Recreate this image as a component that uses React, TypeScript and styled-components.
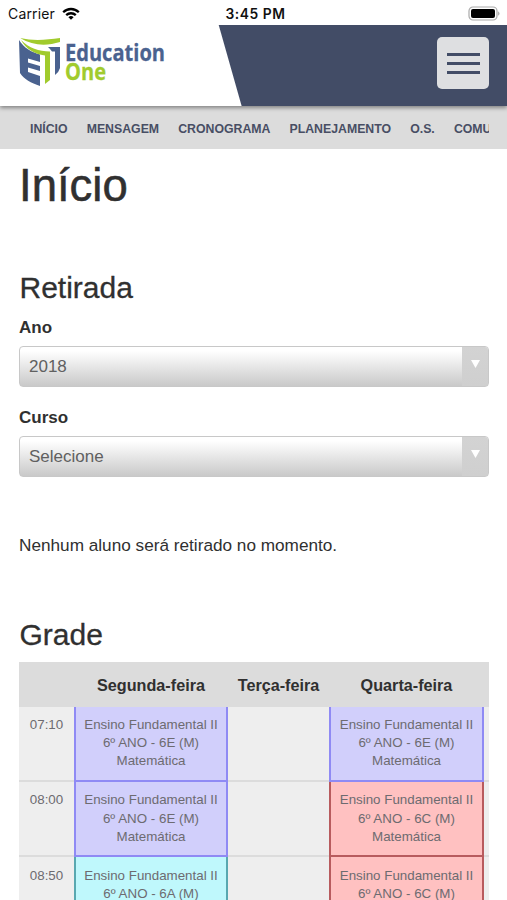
import React from "react";
import styled, { createGlobalStyle } from "styled-components";

const GlobalStyle = createGlobalStyle`
  *, *::before, *::after { box-sizing: border-box; }
  html, body { margin: 0; background: #fff; }
  body { height: 900px; overflow: hidden; color: #303030; font-family: "Liberation Sans", Arial, sans-serif; }
  h1, h2, p { margin: 0; font-weight: 400; }
`;

const Screen = styled.div`
  width: 507px;
  height: 900px;
  overflow: hidden;
  display: flex;
  flex-direction: column;
`;

const StatusBar = styled.div`
  height: 25px;
  flex: none;
  display: grid;
  grid-template-columns: 1fr auto 1fr;
  align-items: center;
  padding: 2px 6px 0 8px;
  color: #111;
  font: 400 14px/22px Inter, sans-serif;
`;
const Carrier = styled.div`
  display: flex;
  align-items: center;
  gap: 7px;
  letter-spacing: 0.16px;
`;
const Clock = styled.div`
  font-weight: 600;
  font-size: 13.8px;
  letter-spacing: 0.55px;
  padding-left: 2px;
`;
const Battery = styled.svg`
  justify-self: end;
  display: block;
`;

const Header = styled.header`
  height: 81px;
  flex: none;
  position: relative;
  z-index: 1;
  display: flex;
  justify-content: space-between;
  align-items: flex-start;
  padding: 12px 18px 0 19px;
  background: linear-gradient(74.2deg, #fff 0 232px, #424c66 233px);
  box-shadow: 0 2px 4px rgba(0, 0, 0, 0.4);
  clip-path: inset(0 0 -10px);
`;
const Logo = styled.svg`
  display: block;
  overflow: visible;
`;
const MenuButton = styled.button`
  width: 52px;
  height: 52px;
  border: 0;
  border-radius: 5px;
  padding: 0;
  background: #dedfe1;
  display: flex;
  flex-direction: column;
  align-items: center;
  justify-content: center;
  gap: 6px;
`;
const MenuLine = styled.span`
  width: 33px;
  height: 3px;
  background: #424c66;
`;

const Nav = styled.nav`
  height: 43px;
  flex: none;
  padding: 0 18px 0 30px;
  background: #dcdcdc;
`;
const NavTrack = styled.div`
  display: flex;
  gap: 19.1px;
  overflow: hidden;
`;
const NavLink = styled.a`
  flex: none;
  color: #484e64;
  font-size: 12.3px;
  line-height: 46px;
  font-weight: 700;
`;

const Main = styled.main`
  padding: 0 18px 0 19px;
`;
const Title = styled.h1`
  font-size: 45.5px;
  line-height: 56px;
  padding-top: 9px;
  height: 117px;
  -webkit-text-stroke: 0.55px #303030;
`;
const SectionTitle = styled.h2`
  font-size: 30px;
  line-height: 44px;
  padding-left: 0.5px;
  -webkit-text-stroke: 0.3px #303030;
`;
const Field = styled.label`
  display: block;
  height: 90px;
`;
const FieldLabel = styled.span`
  display: block;
  font-weight: 700;
  font-size: 17px;
  line-height: 36px;
`;
const SelectBox = styled.div`
  height: 41px;
  border: 1px solid #c8c8c8;
  border-radius: 4px;
  display: flex;
  justify-content: space-between;
  overflow: hidden;
  color: #606060;
  font-size: 17px;
  line-height: 40px;
  padding-left: 9px;
  background: linear-gradient(#fff 10%, #c9c9c9);
`;
const SelectArrow = styled.span`
  width: 26px;
  display: flex;
  justify-content: center;
  padding-top: 13px;
  background: linear-gradient(#d3d3d3, #cfcfcf);
`;
const Notice = styled.p`
  font-size: 17.2px;
  line-height: 24px;
  padding-top: 43px;
  height: 123px;
`;

const TableView = styled.div`
  overflow: hidden;
  margin-top: 5px;
`;
const Schedule = styled.div`
  width: 566px;
  display: grid;
  grid-template-columns: 55px 154px 101px 155px 101px;
`;
const HeadCell = styled.div`
  height: 44.5px;
  background: #dcdcdc;
  text-align: center;
  font-weight: 700;
  font-size: 16.2px;
  line-height: 46px;
`;
const fills = {
  plain: { bg: "#eee", side: "#eee", bottom: "#dcdcdc" },
  violet: { bg: "#d1cffb", side: "#8f8af4", bottom: "#8f8af4" },
  red: { bg: "#ffc1c1", side: "#b85b5e", bottom: "#b85b5e" },
  cyan: { bg: "#bff8fc", side: "#58a8b0", bottom: "#58a8b0" },
};
type Fill = keyof typeof fills;
const Cell = styled.div<{ $fill: Fill }>`
  height: 75.4px;
  padding-top: 9.5px;
  border: solid ${(p) => fills[p.$fill].side};
  border-width: 0 2px;
  border-bottom: 2px solid ${(p) => fills[p.$fill].bottom};
  background: ${(p) => fills[p.$fill].bg};
  color: #6d6b70;
  text-align: center;
  font-size: 13.35px;
  line-height: 18.2px;
  white-space: pre-line;
`;
const TimeCell = styled(Cell)`
  border-width: 0 0 2px;
`;
const EmptyCell = styled(Cell)`
  border-width: 0 0 2px;
`;

type Lesson = { group: string; fill: Fill };
const rows: { time: string; monday: Lesson; wednesday: Lesson }[] = [
  { time: "07:10", monday: { group: "6E", fill: "violet" }, wednesday: { group: "6E", fill: "violet" } },
  { time: "08:00", monday: { group: "6E", fill: "violet" }, wednesday: { group: "6C", fill: "red" } },
  { time: "08:50", monday: { group: "6A", fill: "cyan" }, wednesday: { group: "6C", fill: "red" } },
];

function LessonCell({ lesson }: { lesson: Lesson }) {
  return <Cell $fill={lesson.fill}>{`Ensino Fundamental II\n6º ANO - ${lesson.group} (M)\nMatemática`}</Cell>;
}

function Select({ label, value }: { label: string; value: string }) {
  return (
    <Field>
      <FieldLabel>{label}</FieldLabel>
      <SelectBox>
        {value}
        <SelectArrow>
          <svg width="9" height="8" viewBox="0 0 9 8"><path d="M0 0H9L4.5 8Z" fill="#fff" /></svg>
        </SelectArrow>
      </SelectBox>
    </Field>
  );
}

export default function App() {
  return (
    <Screen>
      <GlobalStyle />
      <StatusBar>
        <Carrier>
          Carrier
          <svg width="18" height="13" viewBox="0 0 18 13" fill="none" stroke="#000" strokeWidth="2.3">
            <path d="M1.2 5.2C5.6.9 12.4.9 16.8 5.2M4.2 8.2C6.9 5.6 11.1 5.6 13.8 8.2" />
            <path d="M6.4 10.2Q9 8 11.6 10.2L9 12.8Z" fill="#000" stroke="none" />
          </svg>
        </Carrier>
        <Clock>3:45 PM</Clock>
        <Battery width="33" height="15" viewBox="0 0 33 15">
          <rect x="1" y="1" width="28" height="13" rx="4" fill="#fff" stroke="#aaa" strokeWidth="1.2" />
          <rect x="3" y="3" width="24" height="9" rx="2" fill="#000" />
          <path d="M30.4 5.2Q32.4 7.5 30.4 9.8Z" fill="#888" />
        </Battery>
      </StatusBar>
      <Header>
        <Logo width="150" height="52" viewBox="0 0 150 52">
          <g fill="#4a628f">
            <path d="M0 3C5 11 12 15 21 17.5V25L9 21.5V25.5L21 29V34L9 30.5V35L21 39V49C12 46 5 42 1 36Z" />
            <path d="M29 10H41V31Q40 35 36 38V14.5H33Q31 11.5 29 10Z" />
          </g>
          <g fill="#a1cb2d">
            <path d="M1 1C14 4 27 3 41 1V5C28 9 14 9 1 1Z" />
            <path d="M2 3C10 11 20 14.5 31 14.5V43L26 47V18.5C15 17 7 12 2 3Z" />
          </g>
          <path d="M1 1.5C10 9 19 12 31 13.5" fill="none" stroke="#fff" strokeWidth="0.8" />
          <g fontFamily='"Open Sans", sans-serif' fontWeight="700" fontSize="23.5">
            <text x="46" y="24" fill="#4a628f" stroke="#4a628f" strokeWidth=".3" textLength="100" lengthAdjust="spacingAndGlyphs">Education</text>
            <text x="46" y="43.3" fill="#a1cb2d" stroke="#a1cb2d" strokeWidth=".3" textLength="41" lengthAdjust="spacingAndGlyphs">One</text>
          </g>
        </Logo>
        <MenuButton aria-label="Menu">
          <MenuLine /><MenuLine /><MenuLine />
        </MenuButton>
      </Header>
      <Nav>
        <NavTrack>
          {["INÍCIO", "MENSAGEM", "CRONOGRAMA", "PLANEJAMENTO", "O.S.", "COMUNICADO"].map((item) => (
            <NavLink key={item}>{item}</NavLink>
          ))}
        </NavTrack>
      </Nav>
      <Main>
        <Title>Início</Title>
        <SectionTitle>Retirada</SectionTitle>
        <Select label="Ano" value="2018" />
        <Select label="Curso" value="Selecione" />
        <Notice>Nenhum aluno será retirado no momento.</Notice>
        <SectionTitle>Grade</SectionTitle>
        <TableView>
          <Schedule>
            <HeadCell />
            <HeadCell>Segunda-feira</HeadCell>
            <HeadCell>Terça-feira</HeadCell>
            <HeadCell>Quarta-feira</HeadCell>
            <HeadCell />
            {rows.map((row) => (
              <React.Fragment key={row.time}>
                <TimeCell $fill="plain">{row.time}</TimeCell>
                <LessonCell lesson={row.monday} />
                <EmptyCell $fill="plain" />
                <LessonCell lesson={row.wednesday} />
                <EmptyCell $fill="plain" />
              </React.Fragment>
            ))}
          </Schedule>
        </TableView>
      </Main>
    </Screen>
  );
}
